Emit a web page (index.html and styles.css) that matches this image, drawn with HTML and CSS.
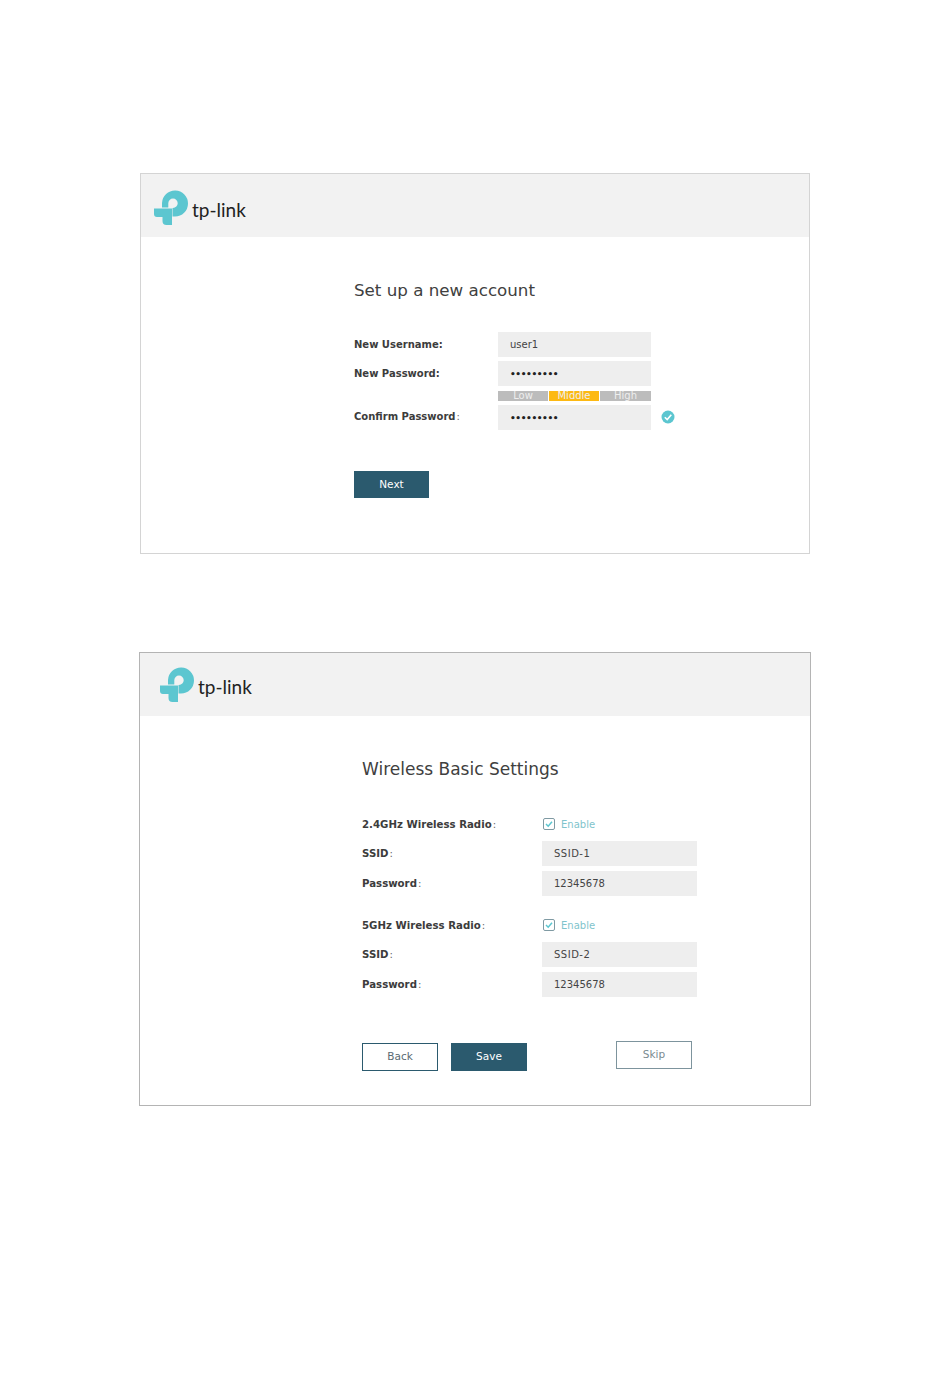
FILE: index.html
```html
<!DOCTYPE html>
<html lang="en">
  <head>
    <meta charset="UTF-8" />
    <title>TP-Link quick setup</title>
    <link rel="stylesheet" href="styles.css">
  </head>
  <body>
    <section class="panel panel-account">
      <div class="panel-header">
        <svg class="logo-mark" viewBox="0 0 34 35"><path d="M0 18.500H18V35H12.500A4 4 0 0 1 8.500 31V27H3A3 3 0 0 1 0 24Z"/><path d="M8 17.500V13A13 13 0 1 1 21 26.500H18.500V18H19A4.700 4.700 0 1 0 14.300 13.300V17.500Z"/></svg>
        <span class="logo-text">tp-link</span>
      </div>
      <div class="panel-body">
        <h2 class="panel-title">Set up a new account</h2>
        <div class="form-row">
          <span class="field-label">New Username:</span>
          <div class="field">user1</div>
        </div>
        <div class="form-row">
          <span class="field-label">New Password:</span>
          <div class="field field-secret">•••••••••</div>
        </div>
        <div class="strength">
          <span>Low</span>
          <span class="strength-on">Middle</span>
          <span>High</span>
        </div>
        <div class="form-row row-confirm">
          <span class="field-label">Confirm Password<span class="colon">:</span></span>
          <div class="field field-secret">•••••••••</div>
          <svg class="ok-icon" viewBox="0 0 14 14"><circle cx="7" cy="7" r="6.500"/><path d="M3.800 7.200L6.200 9.600L10.300 4.800"/></svg>
        </div>
        <div class="button-row">
          <button class="btn btn-primary">Next</button>
        </div>
      </div>
    </section>

    <section class="panel panel-wireless">
      <div class="panel-header">
        <svg class="logo-mark" viewBox="0 0 34 35"><path d="M0 18.500H18V35H12.500A4 4 0 0 1 8.500 31V27H3A3 3 0 0 1 0 24Z"/><path d="M8 17.500V13A13 13 0 1 1 21 26.500H18.500V18H19A4.700 4.700 0 1 0 14.300 13.300V17.500Z"/></svg>
        <span class="logo-text">tp-link</span>
      </div>
      <div class="panel-body">
        <h2 class="panel-title">Wireless Basic Settings</h2>
        <div class="radio-group">
          <div class="form-row row-check">
            <span class="field-label">2.4GHz Wireless Radio<span class="colon">:</span></span>
            <label class="check"><svg class="check-box" viewBox="0 0 12 12"><rect x="0.500" y="0.500" width="11" height="11" rx="1.500"/><path d="M3 6L5.200 8.200L9 3.800"/></svg>Enable</label>
          </div>
          <div class="form-row">
            <span class="field-label">SSID<span class="colon">:</span></span>
            <div class="field field-ssid">SSID-1</div>
          </div>
          <div class="form-row">
            <span class="field-label">Password<span class="colon">:</span></span>
            <div class="field">12345678</div>
          </div>
        </div>
        <div class="radio-group">
          <div class="form-row row-check">
            <span class="field-label">5GHz Wireless Radio<span class="colon">:</span></span>
            <label class="check"><svg class="check-box" viewBox="0 0 12 12"><rect x="0.500" y="0.500" width="11" height="11" rx="1.500"/><path d="M3 6L5.200 8.200L9 3.800"/></svg>Enable</label>
          </div>
          <div class="form-row">
            <span class="field-label">SSID<span class="colon">:</span></span>
            <div class="field field-ssid">SSID-2</div>
          </div>
          <div class="form-row">
            <span class="field-label">Password<span class="colon">:</span></span>
            <div class="field">12345678</div>
          </div>
        </div>
        <div class="button-row">
          <button class="btn btn-outline">Back</button>
          <button class="btn btn-primary">Save</button>
          <button class="btn btn-skip">Skip</button>
        </div>
      </div>
    </section>
  </body>
</html>
```

FILE: styles.css
```css
:root {
  --teal: #5cc6d0;
  --navy: #2b5a6e;
  --field: #eeeeee;
  --text: #3c3c3c;
}

* {
  box-sizing: border-box;
  margin: 0;
  padding: 0;
}

body {
  font-family: "DejaVu Sans", sans-serif;
  background: white;
  color: var(--text);
  padding-top: 173px;
  height: 1387px;
  overflow: hidden;
}

.panel {
  background: white;
  border: 1px solid #d4d4d4;
}

.panel-account {
  width: 670px;
  height: 381px;
  margin-left: 140px;
}

.panel-wireless {
  width: 672px;
  height: 454px;
  margin-left: 139px;
  margin-top: 98px;
  border-color: #b4b4b4;
}

.panel-header {
  display: flex;
  align-items: flex-start;
  height: 63px;
  background: #f2f2f2;
  padding-top: 16px;
  padding-left: 13px;
}

.panel-wireless .panel-header {
  padding-left: 20px;
  padding-top: 14px;
}

.logo-mark {
  width: 34px;
  height: 35px;
  fill: var(--teal);
}

.logo-text {
  font-family: "Lato", sans-serif;
  font-size: 19px;
  line-height: 24px;
  margin-top: 8px;
  margin-left: 4px;
  color: #222222;
}

.panel-body {
  padding-left: 213px;
}

.panel-wireless .panel-body {
  padding-left: 222px;
}

.panel-title {
  font-size: 16.700px;
  font-weight: 400;
  line-height: 20px;
  margin-top: 43px;
  margin-bottom: 32px;
  color: #404040;
}

.panel-wireless .panel-title {
  font-size: 17px;
  line-height: 22px;
  margin-top: 42px;
  margin-bottom: 35px;
}

.form-row {
  display: flex;
  align-items: center;
  height: 25px;
  margin-bottom: 4px;
}

.panel-wireless .form-row {
  margin-bottom: 5px;
}

.field-label {
  width: 144px;
  padding-bottom: 1px;
  font-size: 10px;
  font-weight: 700;
  flex: none;
}

.panel-wireless .field-label {
  width: 180px;
  font-size: 10.200px;
}

.row-confirm .field-label {
  padding-bottom: 3px;
}

.panel-wireless .row-check .field-label {
  padding-bottom: 0;
  padding-top: 1px;
}

.colon {
  font-weight: 400;
  color: #6a6a6a;
  margin-left: 1px;
}

.field {
  width: 153px;
  height: 25px;
  line-height: 25px;
  padding-left: 12px;
  background: var(--field);
  font-size: 10px;
  color: #444444;
}

.panel-wireless .field {
  width: 155px;
}

.field-ssid {
  letter-spacing: 0.500px;
}

.field-secret {
  font-weight: 700;
  font-size: 9px;
  letter-spacing: -0.400px;
  line-height: 27px;
  color: #222222;
}

.strength {
  display: grid;
  grid-template-columns: 50px 52px 51px;
  width: 153px;
  height: 10px;
  margin-left: 144px;
  margin-top: 5px;
  margin-bottom: 4px;
  background: #bcbcbc;
  color: #eeeeee;
  font-size: 10px;
  line-height: 10px;
  text-align: center;
}

.strength-on {
  background: #fdb913;
  border-left: 1px solid white;
  border-right: 1px solid white;
}

.ok-icon {
  width: 14px;
  height: 14px;
  margin-left: 10px;
  margin-bottom: 2px;
  fill: var(--teal);
}

.ok-icon path {
  fill: none;
  stroke: white;
  stroke-width: 1.600;
}

.radio-group {
  margin-bottom: 20px;
}

.panel-wireless .row-check {
  height: 18px;
  margin-bottom: 8px;
}

.check {
  display: flex;
  align-items: center;
  gap: 6px;
  font-size: 10px;
  color: #7fc4cc;
}

.check-box {
  width: 12px;
  height: 12px;
  margin-left: 1px;
}

.check-box rect {
  fill: white;
  stroke: #7f9aa3;
}

.check-box path {
  fill: none;
  stroke: var(--teal);
  stroke-width: 1.500;
}

.button-row {
  display: flex;
  align-items: flex-start;
  gap: 13px;
  margin-top: 41px;
}

.panel-wireless .button-row {
  margin-top: 46px;
}

.btn {
  width: 76px;
  height: 28px;
  padding-bottom: 2px;
  font-family: "DejaVu Sans", sans-serif;
  font-size: 10.500px;
  border: 1px solid var(--navy);
}

.panel-account .btn {
  width: 75px;
  height: 27px;
}

.btn-primary {
  background: var(--navy);
  color: white;
}

.btn-outline {
  background: white;
  color: #5a6a72;
}

.btn-skip {
  background: white;
  color: #7a8a90;
  border-color: #7d949d;
  margin-left: 76px;
  margin-top: -2px;
}
```
